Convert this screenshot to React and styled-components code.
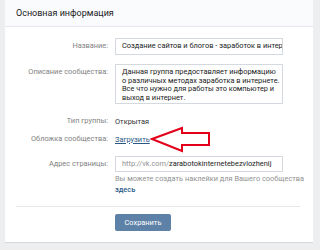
import React from 'react';
import styled, { createGlobalStyle } from 'styled-components';

const GlobalStyle = createGlobalStyle`
  html, body {
    margin: 0;
    padding: 0;
    background: #edeef0;
  }
  body {
    font-family: Roboto, "Open Sans", Arial, sans-serif;
    font-size: 7.4px;
    color: #000;
  }
`;

const Page = styled.div`
  width: 320px;
  height: 250px;
  overflow: hidden;
  padding-left: 5px;
  box-sizing: border-box;
`;

const Card = styled.div`
  width: 308px;
  height: 242px;
  background: #fff;
  box-shadow: 0 1px 0 0 #d7d8db;
  display: flex;
  flex-direction: column;
`;

const Header = styled.div`
  height: 26px;
  background: #fafbfc;
  border-bottom: 1px solid #e7e8ec;
  display: flex;
  align-items: center;
  padding-left: 11px;
  font-size: 9px;
  color: #222;
`;

const Form = styled.div`
  display: flex;
  flex-direction: column;
  padding: 11px 0 0;
`;

const Row = styled.div`
  display: flex;
  align-items: ${p => (p.$top ? 'flex-start' : 'center')};
  gap: 7px;
  height: ${p => (p.$h ? `${p.$h}px` : 'auto')};
  margin-bottom: ${p => p.$mb || 0}px;
  position: relative;
`;

const Label = styled.div`
  width: 103px;
  text-align: right;
  color: #828282;
  flex-shrink: 0;
  padding-top: ${p => p.$pt || 0}px;
  line-height: 8.5px;
`;

const Field = styled.div`
  width: 168px;
  box-sizing: border-box;
  border: 1px solid #d3d9de;
  padding: ${p => (p.$multi ? '3px 6px' : '0 6px')};
  height: ${p => p.$h}px;
  display: flex;
  flex-direction: ${p => (p.$multi ? 'column' : 'row')};
  align-items: ${p => (p.$multi ? 'flex-start' : 'center')};
  white-space: nowrap;
  overflow: hidden;
  line-height: 8.5px;
  color: #222;
`;

const Value = styled.div`
  color: #333;
`;

const Link = styled.a`
  color: #2a5885;
  text-decoration: underline;
`;

const Muted = styled.span`
  color: #929292;
`;

const Hint = styled.div`
  margin-left: 110px;
  margin-top: 1px;
  color: #929292;
  line-height: 11px;
  white-space: nowrap;
`;

const HintLink = styled.div`
  color: #2a5885;
  font-weight: 500;
`;

const Divider = styled.div`
  height: 1px;
  background: #e7e8ec;
  margin: 11px 13px 0 11px;
`;

const SaveButton = styled.button`
  margin: 7px 0 0 110px;
  width: 56px;
  height: 17px;
  border: none;
  border-radius: 2px;
  background: #5e81a8;
  color: #fff;
  font-family: inherit;
  font-size: 7.4px;
  padding: 0;
`;

const ArrowMark = styled.svg`
  position: absolute;
  left: 146px;
  top: -8px;
  overflow: visible;
`;

export default function App() {
  return (
    <Page>
      <GlobalStyle />
      <Card>
        <Header>Основная информация</Header>
        <Form>
          <Row $mb={9}>
            <Label>Название:</Label>
            <Field $h={17}>Создание сайтов и блогов - заработок в интернете</Field>
          </Row>
          <Row $top $mb={12}>
            <Label $pt={4}>Описание сообщества:</Label>
            <Field $multi $h={40}>
              <span>Данная группа предоставляет информацию</span>
              <span>о различных методах заработка в интернете.</span>
              <span>Все что нужно для работы это компьютер и</span>
              <span>выход в интернет.</span>
            </Field>
          </Row>
          <Row $h={10} $mb={8}>
            <Label>Тип группы:</Label>
            <Value>Открытая</Value>
          </Row>
          <Row $h={10} $mb={12}>
            <Label>Обложка сообщества:</Label>
            <Link>Загрузить</Link>
            <ArrowMark width="60" height="26" viewBox="0 0 60 26">
              <polygon
                points="1,13 31,2 31,7 58,7 58,19 31,19 31,25"
                fill="#fff"
                stroke="#e2001a"
                strokeWidth="2"
                strokeLinejoin="miter"
              />
            </ArrowMark>
          </Row>
          <Row>
            <Label>Адрес страницы:</Label>
            <Field $h={16}>
              <Muted>http://vk.com/</Muted>zarabotokinternetebezvlozhenij
            </Field>
          </Row>
          <Hint>
            Вы можете создать наклейки для Вашего сообщества
            <HintLink>здесь</HintLink>
          </Hint>
          <Divider />
          <SaveButton>Сохранить</SaveButton>
        </Form>
      </Card>
    </Page>
  );
}
